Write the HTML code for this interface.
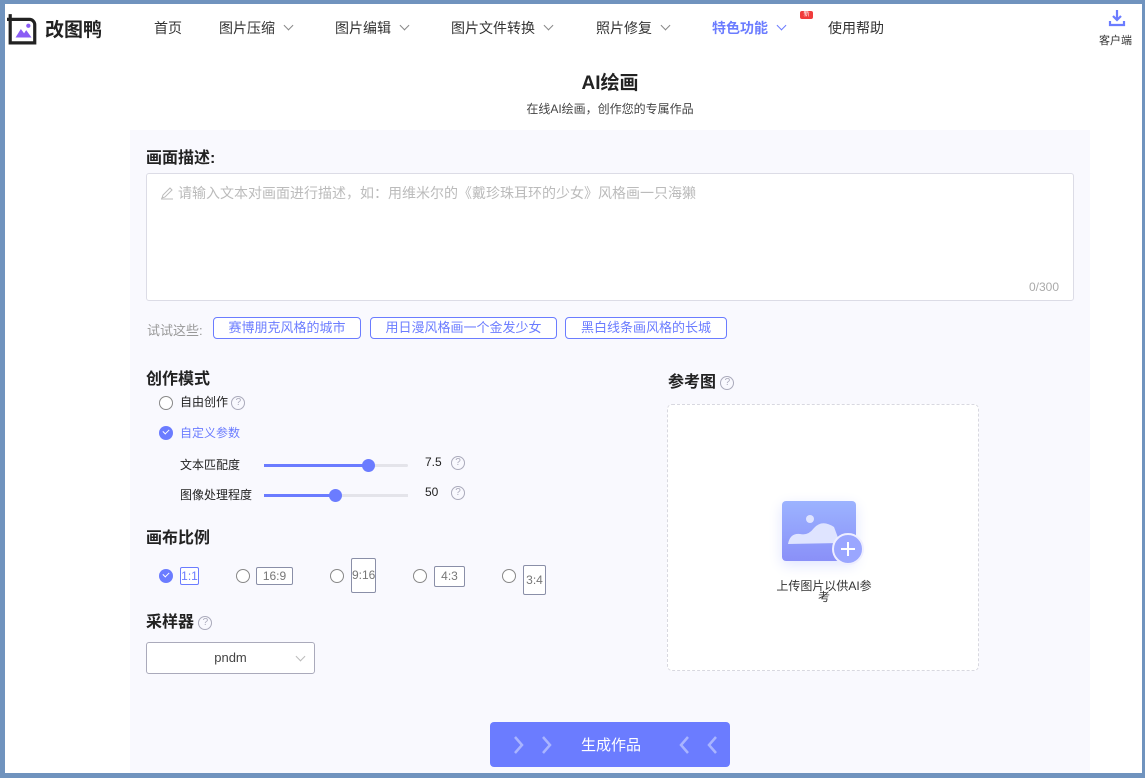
<!DOCTYPE html>
<html><head><meta charset="utf-8"><style>
*{margin:0;padding:0;box-sizing:border-box}
body{width:1145px;height:778px;background:#7093be;font-family:"Liberation Sans","Noto Sans CJK SC",sans-serif;position:relative;overflow:hidden;color:#333}
.page{position:absolute;left:5px;top:4px;width:1137px;height:769px;background:#fff;overflow:hidden}
.a{position:absolute;white-space:nowrap}
.nav{font-size:14px;color:#333;top:14px}
.chev{display:inline-block;width:7px;height:7px;border-right:1px solid #888;border-bottom:1px solid #888;transform:rotate(45deg);margin-left:10px;position:relative;top:-4px}
.panel{position:absolute;left:125px;top:126px;width:960px;height:650px;background:#f9f9fe}
.q{display:inline-block;width:14px;height:14px;border:1px solid #aab;border-radius:50%;font-size:10px;color:#aab;text-align:center;line-height:12px;vertical-align:middle}
.tag{position:absolute;top:313px;height:22px;border:1px solid #6b7cff;border-radius:4px;color:#6b7cff;font-size:13px;line-height:20px;text-align:center;background:#fff}
.radio{position:absolute;width:14px;height:14px;border:1px solid #888;border-radius:50%;background:#fff}
.rchk{position:absolute;width:14px;height:14px;border-radius:50%;background:#6b7cff}
.rchk:after{content:"";position:absolute;left:4px;top:3px;width:5px;height:3px;border-left:1.5px solid #fff;border-bottom:1.5px solid #fff;transform:rotate(-45deg)}
.box{position:absolute;border:1px solid #8a8fa8;border-radius:2px;font-size:12px;color:#777;text-align:center;background:#fff}
.h{font-size:16px;font-weight:bold;color:#222}
</style></head><body><div class="page">
<svg class="a" style="left:2px;top:9px" width="32" height="32" viewBox="0 0 30 30"><path d="M3 1V28H26V11A5 5 0 0 0 21 6H0" fill="none" stroke="#222" stroke-width="3"/><path d="M8 23L13 15L16 19L18 16L23 23Z" fill="#8a5cf5"/><circle cx="20" cy="12" r="2" fill="#8a5cf5"/></svg>
<div class="a" style="left:40px;top:11px;font-size:19px;font-weight:bold;color:#222">改图鸭</div>
<div class="a nav" style="left:149px">首页</div>
<div class="a nav" style="left:214px">图片压缩<span class="chev"></span></div>
<div class="a nav" style="left:330px">图片编辑<span class="chev"></span></div>
<div class="a nav" style="left:446px">图片文件转换<span class="chev"></span></div>
<div class="a nav" style="left:591px">照片修复<span class="chev"></span></div>
<div class="a nav" style="left:707px;color:#6b7cff;font-weight:bold">特色功能<span class="chev" style="border-color:#6b7cff"></span></div>
<div class="a" style="left:795px;top:7px;width:13px;height:8px;background:#f03c3c;border-radius:2px;font-size:6px;color:#fff;text-align:center;line-height:8px">新</div>
<div class="a nav" style="left:823px">使用帮助</div>
<svg class="a" style="left:1103px;top:5px" width="18" height="18" viewBox="0 0 18 18"><path d="M9 1V11M5 7L9 11L13 7M2 12V16H16V12" fill="none" stroke="#6b7cff" stroke-width="2.2"/></svg>
<div class="a" style="left:1094px;top:28px;font-size:11px;color:#333">客户端</div>
<div class="a" style="left:0;width:1210px;top:64px;text-align:center;font-size:19px;font-weight:bold;color:#222">AI绘画</div>
<div class="a" style="left:0;width:1210px;top:96px;text-align:center;font-size:12px;color:#444">在线AI绘画，创作您的专属作品</div>
<div class="panel"></div>
<div class="a h" style="left:141px;top:140px">画面描述:</div>
<div class="a" style="left:141px;top:169px;width:928px;height:128px;background:#fff;border:1px solid #dcdce6;border-radius:3px"></div>
<svg class="a" style="left:155px;top:182px" width="14" height="14" viewBox="0 0 14 14"><path d="M2 12L3 9L10 2L12 4L5 11ZM1 13H13" fill="none" stroke="#bbb"/></svg>
<div class="a" style="left:173px;top:179px;font-size:14px;color:#bbb">请输入文本对画面进行描述，如：用维米尔的《戴珍珠耳环的少女》风格画一只海獭</div>
<div class="a" style="left:1024px;top:276px;font-size:12px;color:#aaa">0/300</div>
<div class="a" style="left:142px;top:316px;font-size:13px;color:#999">试试这些:</div>
<div class="tag" style="left:208px;width:148px">赛博朋克风格的城市</div>
<div class="tag" style="left:365px;width:187px">用日漫风格画一个金发少女</div>
<div class="tag" style="left:560px;width:162px">黑白线条画风格的长城</div>
<div class="a h" style="left:141px;top:361px">创作模式</div>
<div class="radio" style="left:154px;top:392px"></div>
<div class="a" style="left:175px;top:389px;font-size:12px;color:#222">自由创作 <span class="q">?</span></div>
<div class="rchk" style="left:154px;top:422px"></div>
<div class="a" style="left:175px;top:420px;font-size:12px;color:#6b7cff">自定义参数</div>
<div class="a" style="left:175px;top:452px;font-size:12px;color:#222">文本匹配度</div>
<div class="a" style="left:259px;top:460px;width:144px;height:3px;background:#e4e4ea;border-radius:2px"></div>
<div class="a" style="left:259px;top:460px;width:104px;height:3px;background:#6b7cff"></div>
<div class="a" style="left:357px;top:455px;width:13px;height:13px;border-radius:50%;background:#6b7cff"></div>
<div class="a" style="left:420px;top:451px;font-size:12px;color:#222">7.5</div>
<div class="a" style="left:446px;top:450px"><span class="q">?</span></div>
<div class="a" style="left:175px;top:482px;font-size:12px;color:#222">图像处理程度</div>
<div class="a" style="left:259px;top:490px;width:144px;height:3px;background:#e4e4ea"></div>
<div class="a" style="left:259px;top:490px;width:72px;height:3px;background:#6b7cff"></div>
<div class="a" style="left:324px;top:485px;width:13px;height:13px;border-radius:50%;background:#6b7cff"></div>
<div class="a" style="left:420px;top:481px;font-size:12px;color:#222">50</div>
<div class="a" style="left:446px;top:480px"><span class="q">?</span></div>
<div class="a h" style="left:141px;top:520px">画布比例</div>
<div class="rchk" style="left:154px;top:565px"></div>
<div class="box" style="left:175px;top:563px;width:19px;height:18px;line-height:16px;border-color:#6b7cff;color:#6b7cff">1:1</div>
<div class="radio" style="left:231px;top:565px"></div>
<div class="box" style="left:251px;top:563px;width:37px;height:18px;line-height:16px">16:9</div>
<div class="radio" style="left:325px;top:565px"></div>
<div class="box" style="left:346px;top:554px;width:25px;height:35px;line-height:33px">9:16</div>
<div class="radio" style="left:408px;top:565px"></div>
<div class="box" style="left:429px;top:562px;width:31px;height:21px;line-height:19px">4:3</div>
<div class="radio" style="left:497px;top:565px"></div>
<div class="box" style="left:518px;top:561px;width:23px;height:30px;line-height:28px">3:4</div>
<div class="a h" style="left:141px;top:604px">采样器 <span class="q" style="font-weight:normal">?</span></div>
<div class="a" style="left:141px;top:638px;width:169px;height:32px;border:1px solid #aab;border-radius:3px;background:#fff;font-size:13px;color:#444;text-align:center;line-height:30px">pndm<span class="chev" style="position:absolute;right:10px;top:10px;border-color:#bbb"></span></div>
<div class="a h" style="left:663px;top:364px">参考图 <span class="q" style="font-weight:normal">?</span></div>
<div class="a" style="left:662px;top:400px;width:312px;height:267px;border:1.5px dashed #d8d8e0;border-radius:5px;background:#fff"></div>
<div class="a" style="left:777px;top:497px;width:74px;height:60px;border-radius:4px;background:linear-gradient(#9cb3ff,#8a90f8);box-shadow:0 4px 14px #dfe4ff"></div>
<svg class="a" style="left:777px;top:497px" width="90" height="70"><circle cx="28" cy="18" r="4" fill="#dfe4ff"/><path d="M6 43Q8 32 18 33Q26 35 32 27Q40 18 52 26L58 42Z" fill="#dfe4ff"/><circle cx="66" cy="48" r="15" fill="#9aa6ff" stroke="#eef" stroke-width="2"/><path d="M66 41V55M59 48H73" stroke="#fff" stroke-width="2"/></svg>
<div class="a" style="left:769px;top:577px;width:100px;text-align:center;font-size:12px;color:#333;line-height:11px;white-space:normal">上传图片以供AI参考</div>
<div class="a" style="left:485px;top:718px;width:240px;height:45px;background:#6b7cff;border-radius:4px"></div>
<svg class="a" style="left:500px;top:730px" width="220" height="22"><path d="M10 3L17 11L10 19M38 3L45 11L38 19M183 3L176 11L183 19M211 3L204 11L211 19" fill="none" stroke="#a9b4ff" stroke-width="2.5"/></svg>
<div class="a" style="left:576px;top:730px;font-size:15px;color:#fff">生成作品</div>
</div></body></html>
